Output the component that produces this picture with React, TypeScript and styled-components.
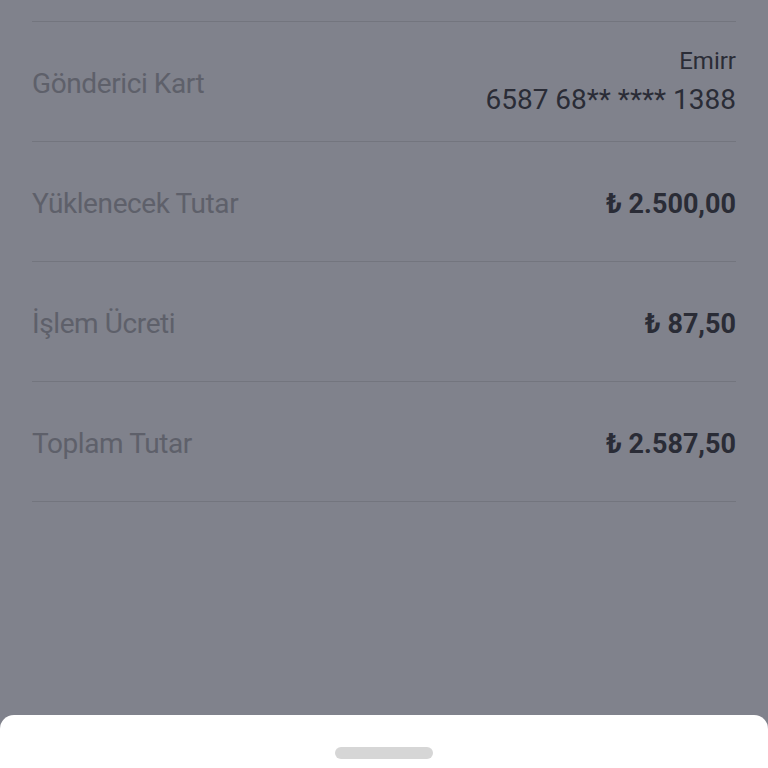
import React from "react";
import styled, { createGlobalStyle } from "styled-components";

const Global = createGlobalStyle`
  html, body {
    margin: 0;
    padding: 0;
    background: #80828c;
    font-family: Roboto, "DejaVu Sans", sans-serif;
  }
`;

const Page = styled.div`
  width: 768px;
  height: 768px;
  display: flex;
  flex-direction: column;
  overflow: hidden;
  background: #80828c;
`;

const List = styled.div`
  flex: 1;
  padding: 21px 32px 0;
  display: flex;
  flex-direction: column;
`;

const Row = styled.div<{ $first?: boolean }>`
  height: ${(p) => (p.$first ? "121px" : "120px")};
  display: flex;
  align-items: center;
  justify-content: space-between;
  padding-top: 4px;
  border-top: ${(p) => (p.$first ? "1.5px solid #73757e" : "none")};
  border-bottom: 1.5px solid #73757e;
  box-sizing: border-box;
`;

const Label = styled.div`
  font-size: 28px;
  color: #5e606a;
  letter-spacing: -0.4px;
`;

const Value = styled.div`
  font-size: 27px;
  font-weight: 700;
  color: #2a2c36;
  text-align: right;
`;

const CardInfo = styled.div`
  display: flex;
  flex-direction: column;
  align-items: flex-end;
  color: #2a2c36;
  gap: 8px;
  margin-top: -4px;
  > .name {
    font-size: 24px;
  }
  > .number {
    font-size: 28px;
  }
`;

const Sheet = styled.div`
  height: 53px;
  background: #ffffff;
  border-radius: 14px 14px 0 0;
  display: flex;
  justify-content: center;
  padding-top: 32px;
  box-sizing: border-box;
`;

const Handle = styled.div`
  width: 98px;
  height: 12px;
  border-radius: 6px;
  background: #d6d6d6;
`;

const rows = [
  { label: "Yüklenecek Tutar", value: "₺ 2.500,00" },
  { label: "İşlem Ücreti", value: "₺ 87,50" },
  { label: "Toplam Tutar", value: "₺ 2.587,50" },
];

export default function App() {
  return (
    <Page>
      <Global />
      <List>
        <Row $first>
          <Label>Gönderici Kart</Label>
          <CardInfo>
            <span className="name">Emirr</span>
            <span className="number">6587 68** **** 1388</span>
          </CardInfo>
        </Row>
        {rows.map((r) => (
          <Row key={r.label}>
            <Label>{r.label}</Label>
            <Value>{r.value}</Value>
          </Row>
        ))}
      </List>
      <Sheet>
        <Handle />
      </Sheet>
    </Page>
  );
}
